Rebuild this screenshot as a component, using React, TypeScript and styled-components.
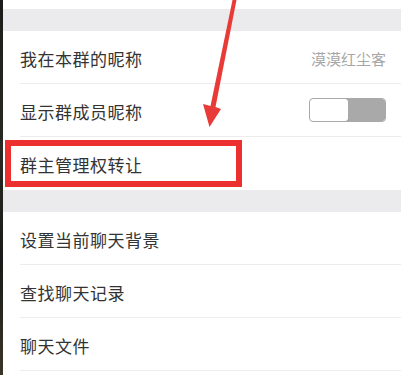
import React from 'react';
import styled, { createGlobalStyle } from 'styled-components';

const GlobalStyle = createGlobalStyle`
  html, body {
    margin: 0;
    padding: 0;
    background: #ffffff;
    font-family: "Noto Sans CJK SC", "Noto Sans", sans-serif;
  }
`;

const Screen = styled.div`
  position: relative;
  display: flex;
  width: 401px;
  height: 375px;
  overflow: hidden;
`;

const Edge = styled.div`
  width: 3px;
  flex-shrink: 0;
  background: linear-gradient(180deg, #1c1c1a 0%, #2a2a24 40%, #1a1a18 70%, #3a3528 100%);
`;

const Main = styled.div`
  flex: 1;
  display: flex;
  flex-direction: column;
  background: #ffffff;
  & > * {
    flex-shrink: 0;
  }
`;

const TopGap = styled.div`
  height: 9px;
  background: #ffffff;
`;

const Band = styled.div`
  height: 22px;
  background: #ebebee;
`;

const Section = styled.div`
  background: #ffffff;
  padding-left: 17px;
`;

const Row = styled.div<{ $last?: boolean }>`
  position: relative;
  height: 53px;
  display: flex;
  align-items: center;
  justify-content: space-between;
  padding-right: 15px;
  box-sizing: border-box;
  border-bottom: ${(p) => (p.$last ? 'none' : '1px solid #ececec')};
`;

const Label = styled.span`
  font-size: 17px;
  color: #333333;
  letter-spacing: 0.5px;
  position: relative;
  top: 1px;
`;

const Value = styled.span`
  font-size: 15px;
  color: #a6a6a6;
  position: relative;
  top: 1px;
`;

const Toggle = styled.div`
  width: 77px;
  height: 24px;
  display: flex;
  border-radius: 4px;
  overflow: hidden;
  border: 1px solid #a9a9a9;
  box-sizing: border-box;
`;

const Knob = styled.div`
  flex: 1;
  background: #ffffff;
  border-radius: 3px;
  box-shadow: 0 0 0 1px #9e9e9e;
`;

const Track = styled.div`
  flex: 1;
  background: #a9a9a9;
`;

const Highlight = styled.div`
  position: absolute;
  left: -15px;
  top: 3px;
  width: 237px;
  height: 47px;
  border: 6px solid #ec2f2f;
  box-sizing: border-box;
  pointer-events: none;
`;

const Arrow = styled.svg`
  position: absolute;
  left: 0;
  top: 0;
  pointer-events: none;
`;

const App: React.FC = () => {
  return (
    <>
      <GlobalStyle />
      <Screen>
        <Edge />
        <Main>
          <TopGap />
          <Band />
          <Section>
            <Row>
              <Label>我在本群的昵称</Label>
              <Value>漠漠红尘客</Value>
            </Row>
            <Row>
              <Label>显示群成员昵称</Label>
              <Toggle>
                <Knob />
                <Track />
              </Toggle>
            </Row>
            <Row $last>
              <Highlight />
              <Label>群主管理权转让</Label>
            </Row>
          </Section>
          <Band />
          <Section>
            <Row>
              <Label>设置当前聊天背景</Label>
            </Row>
            <Row>
              <Label>查找聊天记录</Label>
            </Row>
            <Row>
              <Label>聊天文件</Label>
            </Row>
            <Row />
          </Section>
        </Main>
        <Arrow width="401" height="375" viewBox="0 0 401 375">
          <polygon
            points="232.5,0 236.5,0 215.5,107 221,109 209.5,127 203,104 210.5,106"
            fill="#e83a36"
          />
        </Arrow>
      </Screen>
    </>
  );
};

export default App;
